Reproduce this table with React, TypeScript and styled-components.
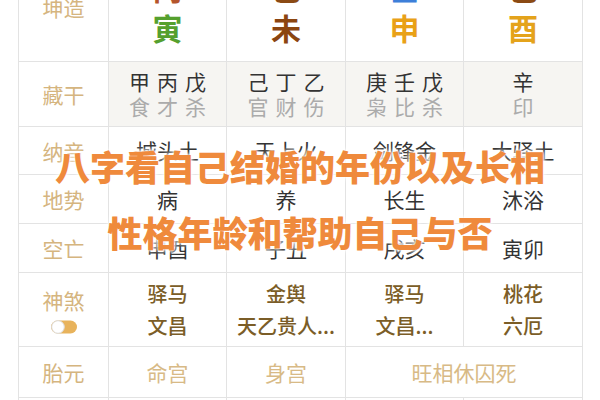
import React from "react";
import styled, { createGlobalStyle } from "styled-components";

const GlobalStyle = createGlobalStyle`
  html, body { margin: 0; padding: 0; background: #ffffff; overflow: hidden; }
  body { font-family: "Noto Sans CJK SC", "Noto Sans", sans-serif; }
`;

const Page = styled.div`
  position: relative;
  width: 600px;
  height: 400px;
  overflow: hidden;
  padding-left: 18px;
  box-sizing: border-box;
`;

const Table = styled.div`
  display: grid;
  grid-template-columns: 89px 117px 118px 117px 118px;
  grid-template-rows: 108px 64px 47px 48px 48px 73px 50px 50px;
  gap: 1px;
  background: #e3e3e3;
  border: 1px solid #e3e3e3;
  margin-top: -48px;
  width: 565px;
  box-sizing: border-box;
`;

const Cell = styled.div<{ $bg?: string; $span?: number }>`
  background: ${(p) => p.$bg || "#ffffff"};
  display: flex;
  flex-direction: column;
  align-items: center;
  justify-content: center;
  grid-column: ${(p) => (p.$span ? `span ${p.$span}` : "auto")};
`;

const Label = styled.div`
  color: #d5b57f;
  font-size: 21px;
  line-height: 30px;
`;

const Toggle = styled.svg`
  margin-top: 4px;
  display: block;
`;

const Pillar = styled.div<{ $color: string }>`
  color: ${(p) => p.$color};
  font-size: 30px;
  font-weight: 700;
  line-height: 40px;
`;

const Main = styled.div<{ $spaced?: boolean }>`
  color: #333333;
  font-size: 21px;
  line-height: 25px;
  letter-spacing: ${(p) => (p.$spaced ? "7px" : "0")};
  padding-left: ${(p) => (p.$spaced ? "7px" : "0")};
`;

const Sub = styled(Main)`
  color: #ababab;
`;

const Shensha = styled.div`
  color: #7b5d27;
  font-size: 20px;
  font-weight: 500;
  line-height: 32px;
`;

const Tan = styled.div`
  color: #d8ba86;
  font-size: 21px;
  line-height: 30px;
`;

const Overlay = styled.div`
  position: absolute;
  left: 0;
  right: 0;
  top: 133px;
  text-align: center;
  pointer-events: none;
`;

const TitleLine = styled.div`
  color: #ef8a3c;
  font-size: 35px;
  font-weight: 900;
  line-height: 66px;
  white-space: nowrap;
  text-shadow: 0 0 2px #ffffff, 0 0 4px #ffffff, 0 0 6px rgba(255,255,255,0.8);
`;

const pillars = [
  { stem: "丙", stemColor: "#b4552c", branch: "寅", branchColor: "#55a02e" },
  { stem: "己", stemColor: "#8b4a14", branch: "未", branchColor: "#8b4510" },
  { stem: "壬", stemColor: "#3d7fd9", branch: "申", branchColor: "#e9a117" },
  { stem: "己", stemColor: "#8b4a14", branch: "酉", branchColor: "#e4a31b" },
];

const hidden = [
  { main: "甲丙戊", sub: "食才杀" },
  { main: "己丁乙", sub: "官财伤" },
  { main: "庚壬戊", sub: "枭比杀" },
  { main: "辛", sub: "印" },
];

const nayin = ["城头土", "天上火", "剑锋金", "大驿土"];
const dishi = ["病", "养", "长生", "沐浴"];
const kongwang = ["申酉", "子丑", "戌亥", "寅卯"];
const shensha = [
  ["驿马", "文昌"],
  ["金舆", "天乙贵人..."],
  ["驿马", "文昌..."],
  ["桃花", "六厄"],
];

export default function App() {
  return (
    <>
      <GlobalStyle />
      <Page>
        <Table>
          <Cell>
            <Label>坤造</Label>
          </Cell>
          {pillars.map((p, i) => (
            <Cell key={`p${i}`}>
              <Pillar $color={p.stemColor}>{p.stem}</Pillar>
              <Pillar $color={p.branchColor}>{p.branch}</Pillar>
            </Cell>
          ))}

          <Cell>
            <Label>藏干</Label>
          </Cell>
          {hidden.map((h, i) => (
            <Cell key={`h${i}`} $bg="#f6f5f2">
              <Main $spaced>{h.main}</Main>
              <Sub $spaced>{h.sub}</Sub>
            </Cell>
          ))}

          <Cell>
            <Label>纳音</Label>
          </Cell>
          {nayin.map((t, i) => (
            <Cell key={`n${i}`}>
              <Main>{t}</Main>
            </Cell>
          ))}

          <Cell>
            <Label>地势</Label>
          </Cell>
          {dishi.map((t, i) => (
            <Cell key={`d${i}`}>
              <Main>{t}</Main>
            </Cell>
          ))}

          <Cell>
            <Label>空亡</Label>
          </Cell>
          {kongwang.map((t, i) => (
            <Cell key={`k${i}`}>
              <Main>{t}</Main>
            </Cell>
          ))}

          <Cell>
            <Label>神煞</Label>
            <Toggle width="28" height="16" viewBox="0 0 28 16">
              <rect x="1" y="1.5" width="26" height="13" rx="6.5" fill="#e8b35c" />
              <circle cx="8" cy="8" r="6.3" fill="#ffffff" stroke="#dcdcdc" strokeWidth="1" />
            </Toggle>
          </Cell>
          {shensha.map((s, i) => (
            <Cell key={`s${i}`}>
              <Shensha>{s[0]}</Shensha>
              <Shensha>{s[1]}</Shensha>
            </Cell>
          ))}

          <Cell>
            <Label>胎元</Label>
          </Cell>
          <Cell>
            <Tan>命宫</Tan>
          </Cell>
          <Cell>
            <Tan>身宫</Tan>
          </Cell>
          <Cell $span={2}>
            <Tan>旺相休囚死</Tan>
          </Cell>

          <Cell />
          <Cell />
          <Cell />
          <Cell />
          <Cell />
        </Table>
        <Overlay>
          <TitleLine>八字看自己结婚的年份以及长相</TitleLine>
          <TitleLine>性格年龄和帮助自己与否</TitleLine>
        </Overlay>
      </Page>
    </>
  );
}
